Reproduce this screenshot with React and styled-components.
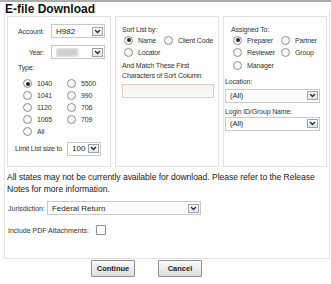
import React from 'react';
import styled, { createGlobalStyle } from 'styled-components';

const GlobalStyle = createGlobalStyle`
    body {
        margin: 0;
        background: #fff;
        font-family: "Liberation Sans", Arial, sans-serif;
        color: #222;
    }
`;

const Page = styled.div`
    width: 331px;
    height: 284px;
    border-top: 2px solid #acacac;
    box-sizing: border-box;
    overflow: hidden;
`;

const Title = styled.div`
    position: relative;
    z-index: 1;
    font-size: 12px;
    line-height: 12px;
    font-weight: bold;
    color: #111;
    padding: 1px 0 0 5px;
    margin-bottom: -5px;
`;

const Frame = styled.div`
    margin: 0 1px 0 4px;
    height: 249px;
    border: 1px solid #e4e4e4;
    border-top: none;
    padding: 6px 0 0 2px;
    box-sizing: border-box;
`;

const Columns = styled.div`
    display: grid;
    grid-template-columns: repeat(3, 104px);
    column-gap: 4px;
`;

const Box = styled.div`
    height: 151px;
    border: 1px solid #e2e2e2;
    box-sizing: border-box;
    padding: ${p => p.$pad || '0'};
    font-size: 7px;
    color: #333;
`;

const Label = styled.span`
    font-size: 7px;
    line-height: 9px;
    letter-spacing: -0.15px;
    color: #333;
    white-space: nowrap;
`;

const FormGrid = styled.div`
    display: grid;
    grid-template-columns: 35px 54px;
    column-gap: 7px;
    row-gap: 7px;
    align-items: center;
    ${Label} { text-align: right; }
`;

const SelectBox = styled.div`
    display: flex;
    align-items: center;
    width: ${p => p.$w}px;
    height: 14px;
    margin-top: ${p => p.$mt || 0}px;
    box-sizing: border-box;
    border: 1px solid #c9c9c9;
    background: #fff;
    padding: 0 1px 0 4px;
    font-size: ${p => p.$fs || 8}px;
    color: #222;
`;

const SelectValue = styled.span`
    flex: 1;
    white-space: nowrap;
    overflow: hidden;
`;

const Blur = styled.span`
    display: block;
    width: 22px;
    height: 9px;
    background: #cfcfcf;
    filter: blur(1.5px);
`;

const Arrow = styled.span`
    display: flex;
    align-items: center;
    justify-content: center;
    width: 11px;
    height: 9px;
    box-sizing: border-box;
    border: 1px solid #a2a2a2;
    background: linear-gradient(#fdfdfd, #e6e6e6);
`;

const Chevron = () => (
    <svg width="7" height="5" viewBox="0 0 7 5">
        <path d="M1 1 L3.5 3.5 L6 1" fill="none" stroke="#1d2a48" strokeWidth="1.3" />
    </svg>
);

const Select = ({ value, width, fs, blur, mt }) => (
    <SelectBox $w={width} $fs={fs} $mt={mt}>
        <SelectValue>{blur ? <Blur /> : value}</SelectValue>
        <Arrow><Chevron /></Arrow>
    </SelectBox>
);

const RadioWrap = styled.span`
    display: inline-flex;
    align-items: center;
    gap: 5px;
    font-size: 7px;
    letter-spacing: -0.15px;
    color: #333;
    white-space: nowrap;
`;

const Circle = styled.span`
    width: 9px;
    height: 9px;
    box-sizing: border-box;
    border-radius: 50%;
    border: 1px solid #8f8f8f;
    background: radial-gradient(circle at 40% 35%, #fff, #ececec);
    display: flex;
    align-items: center;
    justify-content: center;
    &::after {
        content: '';
        display: ${p => (p.$on ? 'block' : 'none')};
        width: 4px;
        height: 4px;
        border-radius: 50%;
        background: #2b2b2b;
    }
`;

const Radio = ({ on, children }) => (
    <RadioWrap><Circle $on={on} />{children}</RadioWrap>
);

const RadioGrid = styled.div`
    display: grid;
    grid-template-columns: ${p => p.$cols};
    grid-auto-rows: ${p => p.$row || 12}px;
    align-items: center;
    padding-left: ${p => p.$indent || 0}px;
`;

const TypeLabel = styled(Label)`
    display: block;
    padding: 4px 0 0 9px;
    text-align: left;
`;

const LimitRow = styled.div`
    display: flex;
    align-items: center;
    gap: 5px;
    margin: 5px 0 0 6px;
`;

const Stack = styled.div`
    display: flex;
    flex-direction: column;
    margin-top: ${p => p.$mt || 0}px;
    ${Label} { line-height: ${p => p.$lh || 9}px; }
`;

const TextField = styled.div`
    width: 92px;
    height: 14px;
    margin-top: 3px;
    box-sizing: border-box;
    border: 1px solid #d8cfbd;
    background: linear-gradient(#f2f2f2, #fbfbfb);
`;

const Notice = styled.p`
    margin: 4px 0 0 0;
    font-size: 8.6px;
    line-height: 12px;
    letter-spacing: -0.05px;
    color: #1a1a1a;
`;

const FieldRow = styled.div`
    display: flex;
    align-items: center;
    gap: ${p => p.$gap || 2}px;
    margin-top: ${p => p.$mt || 0}px;
    padding-left: 1px;
`;

const SmallLabel = styled.span`
    font-size: 7px;
    color: #333;
`;

const CheckBox = styled.span`
    width: 10px;
    height: 10px;
    box-sizing: border-box;
    border: 1px solid #8d8d8d;
    border-radius: 1px;
    background: #fff;
`;

const Buttons = styled.div`
    display: flex;
    gap: 23px;
    padding: 1px 0 0 91px;
`;

const Button = styled.button`
    width: 44px;
    height: 17px;
    padding: 0;
    font-family: "Liberation Sans", Arial, sans-serif;
    font-size: 7.5px;
    font-weight: bold;
    color: #222;
    border: 1px solid #8f8f8f;
    border-radius: 1px;
    background: linear-gradient(#fbfbfb, #dedede);
`;

export default function App() {
    return (
        <>
            <GlobalStyle />
            <Page>
                <Title>E-file Download</Title>
                <Frame>
                    <Columns>
                        <Box $pad="7px 0 0 1px">
                            <FormGrid>
                                <Label>Account:</Label>
                                <Select value="H982" width={54} />
                                <Label>Year:</Label>
                                <Select blur width={54} />
                            </FormGrid>
                            <TypeLabel>Type:</TypeLabel>
                            <RadioGrid $cols="44px 40px" $indent={14} $row={11.8} style={{ marginTop: 6 }}>
                                <Radio on>1040</Radio>
                                <Radio>5500</Radio>
                                <Radio>1041</Radio>
                                <Radio>990</Radio>
                                <Radio>1120</Radio>
                                <Radio>706</Radio>
                                <Radio>1065</Radio>
                                <Radio>709</Radio>
                                <Radio>All</Radio>
                            </RadioGrid>
                            <LimitRow>
                                <Label>Limit List size to</Label>
                                <Select value="100" width={34} />
                            </LimitRow>
                        </Box>
                        <Box $pad="8px 0 0 6px">
                            <Label>Sort List by:</Label>
                            <RadioGrid $cols="40px 54px" $indent={2} $row={12}>
                                <Radio on>Name</Radio>
                                <Radio>Client Code</Radio>
                                <Radio>Locator</Radio>
                            </RadioGrid>
                            <Stack $mt={3} $lh={10}>
                                <Label>And Match These First</Label>
                                <Label>Characters of Sort Column:</Label>
                            </Stack>
                            <TextField />
                        </Box>
                        <Box $pad="8px 0 0 1px">
                            <Label style={{ paddingLeft: 6 }}>Assigned To:</Label>
                            <RadioGrid $cols="48px 46px" $indent={8} $row={12.5}>
                                <Radio on>Preparer</Radio>
                                <Radio>Partner</Radio>
                                <Radio>Reviewer</Radio>
                                <Radio>Group</Radio>
                                <Radio>Manager</Radio>
                            </RadioGrid>
                            <Stack $mt={5}>
                                <Label>Location:</Label>
                                <Select value="(All)" width={95} fs={7.5} mt={3} />
                                <Label style={{ marginTop: 4 }}>Login ID/Group Name:</Label>
                                <Select value="(All)" width={95} fs={7.5} mt={1} />
                            </Stack>
                        </Box>
                    </Columns>
                    <Notice>
                        All states may not be currently available for download. Please refer to the Release Notes for more information.
                    </Notice>
                    <FieldRow $mt={6}>
                        <SmallLabel>Jurisdiction:</SmallLabel>
                        <Select value="Federal Return" width={154} fs={8} />
                    </FieldRow>
                    <FieldRow $mt={10} $gap={7}>
                        <SmallLabel>Include PDF Attachments:</SmallLabel>
                        <CheckBox />
                    </FieldRow>
                </Frame>
                <Buttons>
                    <Button>Continue</Button>
                    <Button>Cancel</Button>
                </Buttons>
            </Page>
        </>
    );
}
